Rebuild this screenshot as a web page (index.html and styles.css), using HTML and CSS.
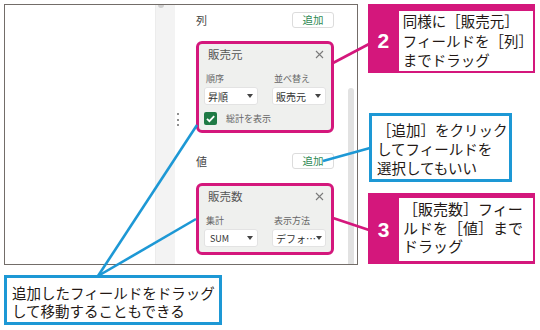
FILE: index.html
```html
<!DOCTYPE html>
<html lang="ja">
<head>
    <meta charset="UTF-8">
    <title>ピボットテーブル エディタ</title>
    <link rel="stylesheet" href="styles.css">
</head>
<body>
    <div class="canvas">
        <!-- スクリーンショット部分 -->
        <div class="screen">
            <div class="sheet-area"></div>
            <div class="splitter"><span class="splitter-knob"></span></div>
            <div class="editor">
                <div class="editor-body">
                    <div class="section-head">
                        <span class="section-title">列</span>
                        <button class="add-btn">追加</button>
                    </div>
                    <div class="field-card">
                        <div class="card-head">
                            <span class="card-title">販売元</span>
                            <svg class="card-close" width="9" height="9" viewBox="0 0 9 9"><path d="M1 1L8 8M8 1L1 8"/></svg>
                        </div>
                        <div class="card-grid">
                            <span class="opt-label">順序</span>
                            <span class="opt-label">並べ替え</span>
                            <div class="select"><span>昇順</span><span class="caret"></span></div>
                            <div class="select"><span>販売元</span><span class="caret"></span></div>
                        </div>
                        <div class="check-row">
                            <span class="checkbox">
                                <svg width="13" height="13" viewBox="0 0 13 13"><path d="M3 6.8L5.4 9.2L10.2 4.2"/></svg>
                            </span>
                            総計を表示
                        </div>
                    </div>

                    <div class="section-head values">
                        <span class="section-title">値</span>
                        <button class="add-btn">追加</button>
                    </div>
                    <div class="field-card">
                        <div class="card-head">
                            <span class="card-title">販売数</span>
                            <svg class="card-close" width="9" height="9" viewBox="0 0 9 9"><path d="M1 1L8 8M8 1L1 8"/></svg>
                        </div>
                        <div class="card-grid card-grid-last">
                            <span class="opt-label">集計</span>
                            <span class="opt-label">表示方法</span>
                            <div class="select select-small"><span>SUM</span><span class="caret"></span></div>
                            <div class="select"><span>デフォ…</span><span class="caret"></span></div>
                        </div>
                    </div>
                </div>
                <div class="scrollbar"></div>
            </div>
            <span class="drag-handle"><i></i><i></i><i></i></span>
        </div>

        <!-- 吹き出し -->
        <div class="step step-2">
            <div class="step-num">2</div>
            <div class="step-text">同様に［販売元］<br>フィールドを［列］<br>までドラッグ</div>
        </div>

        <div class="note note-add">［追加］をクリック<br>してフィールドを<br>選択してもいい</div>

        <div class="step step-3">
            <div class="step-num">3</div>
            <div class="step-text">［販売数］フィー<br>ルドを［値］まで<br>ドラッグ</div>
        </div>

        <div class="note note-drag">追加したフィールドをドラッグ<br>して移動することもできる</div>

        <!-- 引き出し線 -->
        <svg class="leaders" width="540" height="330" viewBox="0 0 540 330">
            <line class="pink" x1="333" y1="63" x2="369" y2="44"/>
            <line class="pink" x1="333" y1="218" x2="369" y2="230"/>
            <line class="blue" x1="323" y1="161" x2="370" y2="148"/>
            <line class="blue" x1="197" y1="125" x2="98" y2="276"/>
            <line class="blue" x1="196" y1="219" x2="98" y2="276"/>
        </svg>
    </div>
</body>
</html>
```

FILE: styles.css
```css
/* ベース */
* {
    margin: 0;
    padding: 0;
    box-sizing: border-box;
}

body {
    background-color: #fff;
    color: #231815;
    font-family: "Noto Sans CJK JP", "Noto Sans", sans-serif;
}

.canvas {
    position: relative;
    width: 540px;
    height: 330px;
    overflow: hidden;
}

/* スクリーンショット */
.screen {
    position: absolute;
    left: 4px;
    top: 4px;
    width: 354px;
    height: 261px;
    border: 1px solid #736d69;
    background-color: #fff;
    display: flex;
}

.sheet-area {
    width: 150px;
}

.splitter {
    width: 20px;
    background-color: #f3f3f3;
    border-left: 1px solid #ececec;
    position: relative;
}

.splitter-knob {
    position: absolute;
    left: 2px;
    top: 0;
    width: 6px;
    height: 3px;
    border-radius: 0 0 3px 3px;
    background-color: #cfcfcf;
}

.editor {
    flex: 1;
    display: flex;
    padding-left: 21px;
}

.editor-body {
    width: 138px;
    padding-top: 7px;
}

.scrollbar {
    width: 6px;
    margin-left: 14px;
    margin-top: 83px;
    background-color: #e2e2e2;
    border-radius: 3px 3px 0 0;
}

.drag-handle {
    position: absolute;
    left: 172px;
    top: 108px;
    display: flex;
    flex-direction: column;
    gap: 3.5px;
}

.drag-handle i {
    width: 2px;
    height: 2px;
    border-radius: 50%;
    background-color: #6d6d6d;
}

.section-head {
    display: flex;
    justify-content: space-between;
    align-items: center;
    height: 16px;
}

.section-head.values {
    margin-top: 20px;
}

.section-title {
    font-size: 11px;
    color: #444;
}

.add-btn {
    width: 42px;
    height: 16px;
    border: 1px solid #dcdcdc;
    border-radius: 3px;
    background-color: #fff;
    color: #2f8a54;
    font-family: inherit;
    font-size: 10.5px;
    line-height: 14px;
}

/* フィールドカード */
.field-card {
    margin-top: 13px;
    border: 3px solid #d4177c;
    border-radius: 6px;
    background-color: #eff0ee;
}

.section-head.values + .field-card {
    margin-top: 14px;
}

.card-head {
    height: 20px;
    display: flex;
    justify-content: space-between;
    align-items: center;
    padding: 0 7px 0 9px;
}

.card-title {
    font-size: 11.5px;
    color: #555;
}

.card-close path {
    stroke: #7a7a7a;
    stroke-width: 1.1;
    fill: none;
}

.card-grid {
    display: grid;
    grid-template-columns: 54px 54px;
    column-gap: 14px;
    row-gap: 3px;
    margin-top: 9px;
    padding: 0 5px;
}

.card-grid-last {
    padding-bottom: 5px;
}

.opt-label {
    font-size: 9px;
    line-height: 11px;
    color: #666;
    padding-left: 2px;
}

.select {
    height: 18px;
    display: flex;
    justify-content: space-between;
    align-items: center;
    padding: 0 5px 0 4px;
    background-color: #fff;
    border-radius: 3px;
    box-shadow: inset 0 0 0 1px #e3e3e3;
    font-size: 10px;
    color: #333;
    white-space: nowrap;
}

.select-small {
    font-size: 9px;
    padding-left: 6px;
}

.caret {
    width: 0;
    height: 0;
    border-left: 3.5px solid transparent;
    border-right: 3.5px solid transparent;
    border-top: 4px solid #444;
}

.check-row {
    display: flex;
    align-items: center;
    gap: 9px;
    height: 13px;
    margin: 7px 0 5px;
    padding-left: 5px;
    font-size: 9px;
    color: #666;
}

.checkbox {
    width: 13px;
    height: 13px;
    border-radius: 2px;
    background-color: #1f7a45;
    display: flex;
}

.checkbox path {
    stroke: #fff;
    stroke-width: 1.8;
    fill: none;
}

/* 手順の吹き出し */
.step {
    position: absolute;
    display: flex;
    background-color: #d4177c;
}

.step-num {
    width: 31px;
    display: flex;
    justify-content: center;
    align-items: center;
    color: #fff;
    font-family: "Liberation Sans", sans-serif;
    font-weight: bold;
    font-size: 21px;
}

.step-text {
    flex: 1;
    background-color: #fff;
    padding-left: 4px;
    white-space: nowrap;
}

.step-2 {
    left: 368px;
    top: 4px;
    width: 167px;
    height: 69px;
    padding: 7px 2px 2px 0;
}

.step-2 .step-text {
    font-size: 14.5px;
    line-height: 19.5px;
}

.step-3 {
    left: 368px;
    top: 193px;
    width: 167px;
    height: 71px;
    padding: 5px 2px 3px 0;
}

.step-3 .step-text {
    font-size: 15px;
    line-height: 18.5px;
    padding-top: 2px;
}

.note {
    position: absolute;
    border: 3px solid #1d98d5;
    background-color: #fff;
    font-size: 14.5px;
    white-space: nowrap;
}

.note-add {
    left: 369px;
    top: 113px;
    width: 143px;
    height: 69px;
    padding: 4px 0 0 5px;
    line-height: 19px;
}

.note-drag {
    left: 4px;
    top: 275px;
    width: 218px;
    height: 50px;
    padding: 6px 0 0 5px;
    line-height: 17.5px;
}

/* 引き出し線 */
.leaders {
    position: absolute;
    left: 0;
    top: 0;
    pointer-events: none;
}

.leaders line {
    stroke-width: 2.6;
}

.leaders .pink {
    stroke: #d4177c;
}

.leaders .blue {
    stroke: #1d98d5;
}
```
